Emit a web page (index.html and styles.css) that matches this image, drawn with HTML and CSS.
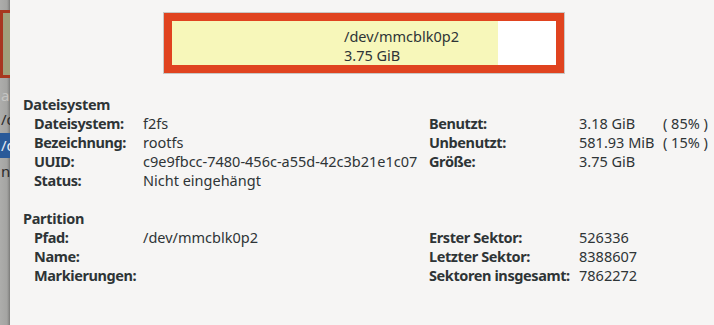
FILE: index.html
```html
<!DOCTYPE html>
<html lang="de">
<head>
  <meta charset="UTF-8">
  <title>Informationen über /dev/mmcblk0p2</title>
  <link rel="stylesheet" href="styles.css">
</head>
<body>

  <!-- window behind the dialog -->
  <aside class="backdrop">
    <div class="backdrop-part"></div>
    <div class="backdrop-row faint">ar</div>
    <div class="backdrop-row">/d</div>
    <div class="backdrop-row selected">/d</div>
    <div class="backdrop-row">n</div>
  </aside>

  <main class="dialog">
    <div class="usage-bar">
      <div class="usage-inner">
        <div class="usage-used" style="width: 85%"></div>
        <div class="usage-label">
          <span>/dev/mmcblk0p2</span>
          <span>3.75 GiB</span>
        </div>
      </div>
    </div>

    <section class="info">
      <h3 class="info-title">Dateisystem</h3>
      <div class="info-grid">
        <span class="key">Dateisystem:</span><span>f2fs</span>
        <span class="key">Benutzt:</span><span>3.18 GiB</span><span>( 85% )</span>

        <span class="key">Bezeichnung:</span><span>rootfs</span>
        <span class="key">Unbenutzt:</span><span>581.93 MiB</span><span>( 15% )</span>

        <span class="key">UUID:</span><span>c9e9fbcc-7480-456c-a55d-42c3b21e1c07</span>
        <span class="key">Größe:</span><span>3.75 GiB</span><span></span>

        <span class="key">Status:</span><span>Nicht eingehängt</span>
        <span></span><span></span><span></span>
      </div>
    </section>

    <section class="info">
      <h3 class="info-title">Partition</h3>
      <div class="info-grid">
        <span class="key">Pfad:</span><span>/dev/mmcblk0p2</span>
        <span class="key">Erster Sektor:</span><span>526336</span><span></span>

        <span class="key">Name:</span><span></span>
        <span class="key">Letzter Sektor:</span><span>8388607</span><span></span>

        <span class="key">Markierungen:</span><span></span>
        <span class="key">Sektoren insgesamt:</span><span>7862272</span><span></span>
      </div>
    </section>
  </main>

</body>
</html>
```

FILE: styles.css
```css
body {
  margin: 0;
  height: 325px;
  display: flex;
  overflow: hidden;
  font-family: "Noto Sans", sans-serif;
  font-size: 14.5px;
  line-height: 19px;
  color: #2e3436;
  background: #f6f5f4;
}

/* dimmed window in the back */
.backdrop {
  width: 10px;
  flex-shrink: 0;
  overflow: hidden;
  background: linear-gradient(to right, #adadab 0, #a4a4a2 7px, #8a8a88 9px, #7a7a78 10px);
  padding-top: 10px;
  white-space: nowrap;
}

.backdrop-part {
  height: 62px;
  margin-bottom: 6px;
  border: 3px solid #a8381f;
  border-right: none;
  background: #a1a27c;
}

.backdrop-row {
  height: 26px;
  padding-left: 1px;
  color: #2b2b2b;
  font-size: 15px;
  line-height: 26px;
}

.backdrop-row.faint {
  height: 22px;
  line-height: 22px;
  margin-top: 2px;
  color: #c4c4c2;
}

.backdrop-row.selected {
  height: 25px;
  line-height: 25px;
  margin-top: 1px;
  background: #2a5a99;
  color: #e6ecf4;
}

.dialog {
  flex: 1;
  padding: 12px 0 0 13px;
}

.usage-bar {
  width: 384px;
  height: 44px;
  margin: 1px 0 0 141px;
  border: 8px solid #e0431f;
  box-shadow: 0 0 0 1px #c9c7c4;
  background: #fff;
}

.usage-inner {
  position: relative;
  height: 100%;
}

.usage-used {
  height: 100%;
  background: #f7f7ba;
}

.usage-label {
  position: absolute;
  top: 6px;
  left: 172px;
  display: flex;
  flex-direction: column;
}

.info {
  margin-top: 22px;
}

.info + .info {
  margin-top: 19px;
}

.info-title {
  margin: 0;
  font-size: 14.5px;
  font-weight: bold;
  letter-spacing: -0.3px;
}

.info-grid {
  display: grid;
  grid-template-columns: 109px 286px 150px 84px auto;
  margin-left: 11px;
  white-space: nowrap;
}

.key {
  font-weight: bold;
  letter-spacing: -0.4px;
}
```
